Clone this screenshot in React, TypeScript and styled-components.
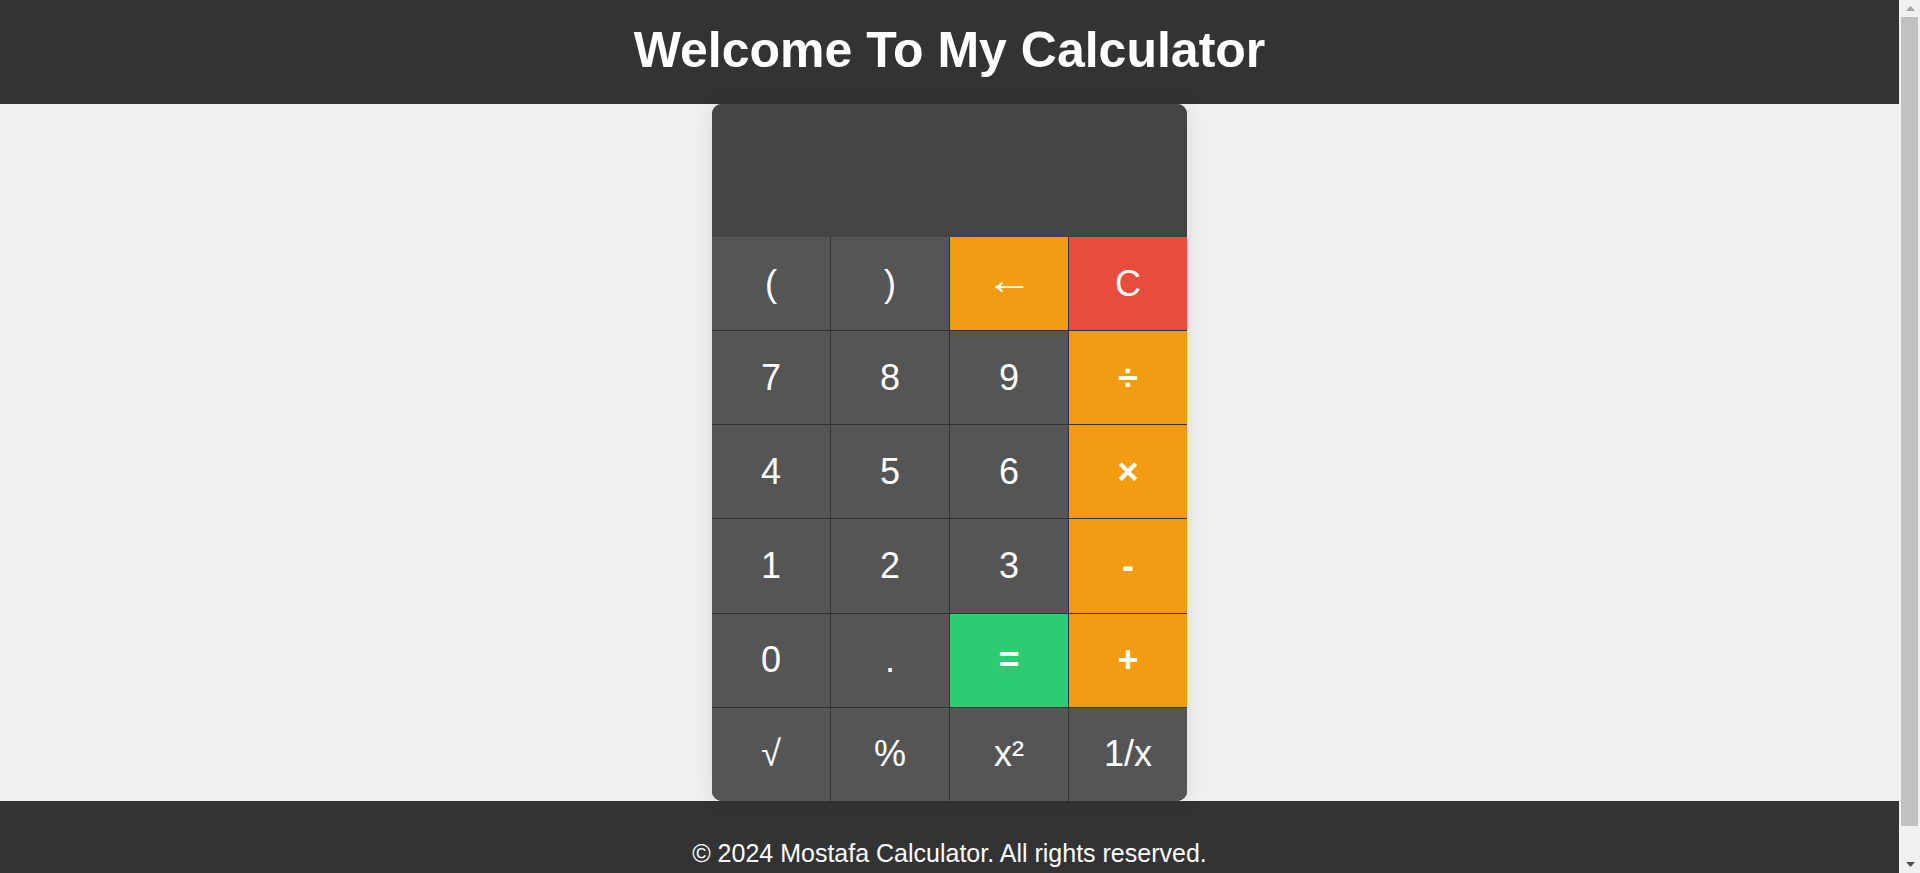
import React from "react";
import styled, { createGlobalStyle } from "styled-components";

const GlobalStyle = createGlobalStyle`
  html, body {
    margin: 0;
    padding: 0;
  }
  body {
    font-family: "Liberation Sans", Arial, Helvetica, sans-serif;
    background: #f0f0f0;
  }
  * { box-sizing: border-box; }
`;

const Shell = styled.div`
  display: flex;
  align-items: flex-start;
  width: 100%;
`;

const Page = styled.div`
  flex: 1;
  min-width: 0;
`;

const ScrollBar = styled.div`
  flex: none;
  width: 21px;
  height: 873px;
  display: flex;
  flex-direction: column;
  background: #f1f1f1;
`;

const ScrollButton = styled.div`
  height: 17px;
  flex: none;
  display: flex;
  align-items: center;
  justify-content: center;
  padding-left: 1px;
`;

const Track = styled.div`
  flex: 1;
  padding: 0 2px;
`;

const Thumb = styled.div`
  height: 809px;
  background: #c1c1c1;
`;

const Header = styled.header`
  background: #333333;
  color: #ffffff;
  text-align: center;
  padding: 18px 0 22px;
`;

const Title = styled.h1`
  margin: 0;
  font-size: 50px;
  line-height: 64px;
  font-weight: 700;
`;

const Main = styled.main`
  display: flex;
  justify-content: center;
`;

const Calculator = styled.div`
  width: 25%;
  height: 697px;
  display: flex;
  flex-direction: column;
  background: #333333;
  border-radius: 10px;
  overflow: hidden;
  box-shadow: 0 0 20px rgba(0, 0, 0, 0.1);
`;

const Display = styled.div`
  height: 133px;
  flex: none;
  background: #444444;
  color: #ffffff;
  font-size: 40px;
  text-align: right;
  padding: 20px;
`;

const Keys = styled.div`
  flex: 1;
  display: grid;
  grid-template-columns: repeat(4, 1fr);
  grid-template-rows: repeat(6, 1fr);
  gap: 1px;
`;

type Variant = "num" | "op" | "clear" | "equal";

const colors: Record<Variant, string> = {
  num: "#555555",
  op: "#f39c12",
  clear: "#e74c3c",
  equal: "#2ecc71",
};

const Key = styled.button<{ $variant: Variant; $bold?: boolean }>`
  border: none;
  margin: 0;
  padding: 0;
  background: ${(p) => colors[p.$variant]};
  color: #ffffff;
  font-family: inherit;
  font-size: 36px;
  font-weight: ${(p) => (p.$bold ? 700 : 400)};
  cursor: pointer;
  display: flex;
  align-items: center;
  justify-content: center;
`;

const Arrow = styled.span`
  font-size: 40px;
  display: inline-block;
  transform: translateY(-3px) scaleX(1.18);
`;

const Footer = styled.footer`
  background: #333333;
  color: #ffffff;
  text-align: center;
  padding: 20px 0;
`;

const FooterText = styled.p`
  margin: 0;
  font-size: 25px;
  line-height: 64px;
`;

const keys: { label: string; variant: Variant; bold?: boolean }[] = [
  { label: "(", variant: "num" },
  { label: ")", variant: "num" },
  { label: "←", variant: "op" },
  { label: "C", variant: "clear" },
  { label: "7", variant: "num" },
  { label: "8", variant: "num" },
  { label: "9", variant: "num" },
  { label: "÷", variant: "op", bold: true },
  { label: "4", variant: "num" },
  { label: "5", variant: "num" },
  { label: "6", variant: "num" },
  { label: "×", variant: "op", bold: true },
  { label: "1", variant: "num" },
  { label: "2", variant: "num" },
  { label: "3", variant: "num" },
  { label: "-", variant: "op", bold: true },
  { label: "0", variant: "num" },
  { label: ".", variant: "num" },
  { label: "=", variant: "equal", bold: true },
  { label: "+", variant: "op", bold: true },
  { label: "√", variant: "num" },
  { label: "%", variant: "num" },
  { label: "x²", variant: "num" },
  { label: "1/x", variant: "num" },
];

export default function App() {
  return (
    <>
      <GlobalStyle />
      <Shell>
        <Page>
          <Header>
            <Title>Welcome To My Calculator</Title>
          </Header>
          <Main>
            <Calculator>
              <Display />
              <Keys>
                {keys.map((k) => (
                  <Key key={k.label} $variant={k.variant} $bold={k.bold}>
                    {k.label === "←" ? <Arrow>←</Arrow> : k.label}
                  </Key>
                ))}
              </Keys>
            </Calculator>
          </Main>
          <Footer>
            <FooterText>© 2024 Mostafa Calculator. All rights reserved.</FooterText>
          </Footer>
        </Page>
        <ScrollBar aria-hidden="true">
          <ScrollButton>
            <svg width="9" height="5" viewBox="0 0 9 5">
              <polygon points="4.5,0 9,5 0,5" fill="#a3a3a3" />
            </svg>
          </ScrollButton>
          <Track>
            <Thumb />
          </Track>
          <ScrollButton>
            <svg width="9" height="5" viewBox="0 0 9 5">
              <polygon points="0,0 9,0 4.5,5" fill="#505050" />
            </svg>
          </ScrollButton>
        </ScrollBar>
      </Shell>
    </>
  );
}
